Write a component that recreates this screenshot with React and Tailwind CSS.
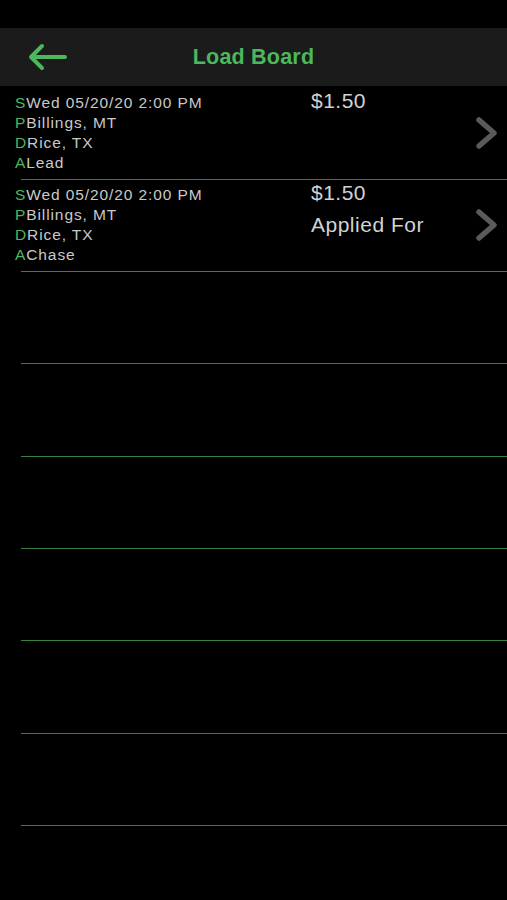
import React from "react";

const loads = [
    { date: "Wed 05/20/20 2:00 PM", pickup: "Billings, MT", drop: "Rice, TX", agent: "Lead", price: "$1.50", status: "" },
    { date: "Wed 05/20/20 2:00 PM", pickup: "Billings, MT", drop: "Rice, TX", agent: "Chase", price: "$1.50", status: "Applied For" },
];

const emptyRows = ["h-[92px]", "h-[93px]", "h-[92px]", "h-[92px]", "h-[93px]", "h-[92px]"];

function Chevron() {
    return (
        <svg width="24" height="34" viewBox="0 0 24 34" fill="none">
            <path d="M4 4 L19 17 L4 30" stroke="#5a5a5a" strokeWidth="5.5" strokeLinecap="round" strokeLinejoin="round" />
        </svg>
    );
}

function Line({ tag, text }) {
    return (
        <div className="flex">
            <span className="text-[#4cb85c]">{tag}</span>
            <span>{text}</span>
        </div>
    );
}

function Row({ load }) {
    return (
        <div className="h-[92px] flex flex-col">
            <div className="flex-1 flex">
                <div className="w-[311px] pl-[15px] pt-[5px] text-[15.5px] leading-[20px] tracking-[0.9px] text-[#c9c9c9]">
                    <Line tag="S" text={load.date} />
                    <Line tag="P" text={load.pickup} />
                    <Line tag="D" text={load.drop} />
                    <Line tag="A" text={load.agent} />
                </div>
                <div className="flex-1 -mt-[3px] text-[21px] leading-[32px] tracking-[0.5px] text-[#d2d2d2]">
                    <div>{load.price}</div>
                    {load.status && <div>{load.status}</div>}
                </div>
                <div className="flex items-center pr-[8px] pb-px">
                    <Chevron />
                </div>
            </div>
            <div className="ml-[21px] h-px bg-[#33823f]" />
        </div>
    );
}

function EmptyRow({ h }) {
    return (
        <div className={`${h} flex flex-col`}>
            <div className="flex-1" />
            <div className="ml-[21px] h-px bg-[#33823f]" />
        </div>
    );
}

export default function App() {
    return (
        <div className="w-[507px] h-[900px] bg-black overflow-hidden font-['Liberation_Sans',Arial,sans-serif]">
            {/* status bar area */}
            <div className="h-[28px]" />

            <div className="h-[58px] bg-[#1b1b1b] relative flex items-center justify-center">
                <button className="absolute left-[27px] top-[15px]">
                    <svg width="40" height="28" viewBox="0 0 40 28" fill="none">
                        <path d="M4 14 H38 M15 3 L4 14 L15 25" stroke="#4cb85c" strokeWidth="4" strokeLinecap="round" strokeLinejoin="round" />
                    </svg>
                </button>
                <h1 className="text-[21.5px] font-semibold text-[#4cb85c] tracking-[0.2px]">Load Board</h1>
            </div>

            <div className="pt-[2px]">
                {loads.map((load, i) => (
                    <Row key={i} load={load} />
                ))}
                {emptyRows.map((h, i) => (
                    <EmptyRow key={i} h={h} />
                ))}
            </div>
        </div>
    );
}
